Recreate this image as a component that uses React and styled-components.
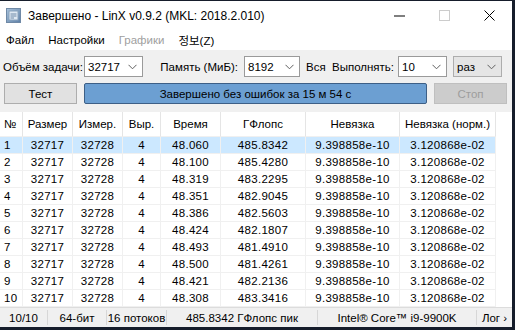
import React from 'react';
import styled, { createGlobalStyle } from 'styled-components';

const GlobalStyle = createGlobalStyle`
  html, body {
    margin: 0;
    padding: 0;
    background: #161d2b;
  }
  body {
    font-family: 'Liberation Sans', Arial, 'Noto Sans CJK KR', sans-serif;
    font-size: 11px;
    color: #000;
  }
`;

const Window = styled.div`
  width: 512px;
  height: 326px;
  margin-top: 1px;
  background: #f0f0f0;
  display: flex;
  flex-direction: column;
  overflow: hidden;
`;

const TitleBar = styled.div`
  height: 29px;
  background: #fff;
  display: flex;
  align-items: center;
  padding-left: 6px;
`;

const Title = styled.div`
  flex: 1;
  margin-left: 7px;
  font-size: 12px;
  color: #000;
`;

const WinButton = styled.div`
  width: 45px;
  height: 29px;
  display: flex;
  align-items: center;
  justify-content: center;
  margin-left: ${(p) => p.ml || 0}px;
`;

const MenuBar = styled.div`
  height: 20px;
  background: #fff;
  display: flex;
  align-items: center;
  padding-left: 6px;
  gap: 14px;
  font-size: 11.5px;
`;

const MenuItem = styled.span`
  color: ${(p) => (p.disabled ? '#a0a0a0' : '#000')};
  font-family: 'Liberation Sans', 'Noto Sans CJK KR', sans-serif;
`;

const Panel = styled.div`
  display: flex;
  flex-direction: column;
  gap: 6px;
  padding: 6px 0 8px 0;
`;

const Row = styled.div`
  display: flex;
  align-items: center;
  height: 21px;
  padding-left: ${(p) => p.pl || 0}px;
`;

const Label = styled.div`
  width: ${(p) => p.w}px;
  padding-left: ${(p) => p.pl || 0}px;
  padding-right: ${(p) => p.pr || 0}px;
  text-align: ${(p) => p.align || 'left'};
  box-sizing: border-box;
  white-space: nowrap;
  font-size: 11.5px;
`;

const Combo = styled.div`
  width: ${(p) => p.w}px;
  height: 21px;
  box-sizing: border-box;
  margin-left: ${(p) => p.ml || 0}px;
  border: 1px solid ${(p) => (p.button ? '#adadad' : '#9a9a9a')};
  background: ${(p) => (p.button ? '#e5e5e5' : '#fff')};
  display: flex;
  align-items: center;
  justify-content: space-between;
  padding: 0 5px 0 3px;
  font-size: 11.5px;
`;

const Button = styled.div`
  width: ${(p) => p.w}px;
  height: 21px;
  box-sizing: border-box;
  display: flex;
  align-items: center;
  justify-content: center;
  border: 1px solid ${(p) => (p.disabled ? '#bfbfbf' : '#adadad')};
  background: ${(p) => (p.disabled ? '#cccccc' : '#e1e1e1')};
  color: ${(p) => (p.disabled ? '#9d9d9d' : '#000')};
  font-size: 11.5px;
`;

const Progress = styled.div`
  width: 343px;
  height: 21px;
  margin: 0 7px;
  box-sizing: border-box;
  border: 1px solid #3d5f86;
  border-radius: 2px;
  background: #6c9fd2;
  display: flex;
  align-items: center;
  justify-content: center;
  font-size: 11.5px;
`;

const Table = styled.div`
  flex: 1;
  background: #fff;
  display: flex;
  flex-direction: column;
`;

const GridRow = styled.div`
  display: grid;
  grid-template-columns: 23px 50px 50px 38px 60px 85px 94px 96px;
  height: ${(p) => (p.header ? 25 : 17)}px;
`;

const Cell = styled.div`
  box-sizing: border-box;
  border-right: 1px solid ${(p) => (p.header ? '#e5e5e5' : '#f0f0f0')};
  border-bottom: 1px solid #f0f0f0;
  background: ${(p) => (p.selected ? '#cce8ff' : '#fff')};
  display: flex;
  align-items: center;
  justify-content: ${(p) => (p.left ? 'flex-start' : 'center')};
  padding-left: ${(p) => (p.left ? 4 : 0)}px;
  white-space: nowrap;
  font-size: 11.5px;
  letter-spacing: ${(p) => (p.header ? 0 : 0.3)}px;
`;

const StatusBar = styled.div`
  height: 19px;
  display: flex;
  align-items: center;
  background: #f0f0f0;
  border-top: 1px solid #dcdcdc;
`;

const StatusItem = styled.div`
  width: ${(p) => p.w}px;
  height: 15px;
  box-sizing: border-box;
  display: flex;
  align-items: center;
  justify-content: center;
  border-right: ${(p) => (p.last ? 'none' : '1px solid #d7d7d7')};
  white-space: nowrap;
  font-size: 11.5px;
`;

const Chevron = () => (
  <svg width="9" height="6" viewBox="0 0 9 6">
    <path d="M0.5 0.8 L4.5 4.8 L8.5 0.8" fill="none" stroke="#606060" strokeWidth="1" />
  </svg>
);

const AppIcon = () => (
  <svg width="15" height="15" viewBox="0 0 15 15">
    <defs>
      <linearGradient id="ig" x1="0" y1="0" x2="1" y2="1">
        <stop offset="0" stopColor="#a9c3dc" />
        <stop offset="1" stopColor="#5d7fa6" />
      </linearGradient>
    </defs>
    <rect x="0.5" y="0.5" width="14" height="14" fill="url(#ig)" stroke="#6f89a6" />
    <rect x="3" y="3" width="9" height="9" fill="#dfe9f3" stroke="#8aa3bd" />
    <path d="M4.5 6 H10.5 M4.5 8 H10.5 M4.5 10 H8" stroke="#6f8aa8" strokeWidth="1" />
  </svg>
);

const columns = ['№', 'Размер', 'Измер.', 'Выр.', 'Время', 'ГФлопс', 'Невязка', 'Невязка (норм.)'];

const results = [
  ['48.060', '485.8342'],
  ['48.100', '485.4280'],
  ['48.319', '483.2295'],
  ['48.351', '482.9045'],
  ['48.386', '482.5603'],
  ['48.424', '482.1807'],
  ['48.493', '481.4910'],
  ['48.500', '481.4261'],
  ['48.421', '482.2136'],
  ['48.308', '483.3416'],
];

export default function App() {
  return (
    <>
      <GlobalStyle />
      <Window>
        <TitleBar>
          <AppIcon />
          <Title>Завершено - LinX v0.9.2 (MKL: 2018.2.010)</Title>
          <WinButton>
            <svg width="11" height="2" viewBox="0 0 11 2">
              <rect x="0" y="0.5" width="11" height="1" fill="#000" />
            </svg>
          </WinButton>
          <WinButton>
            <svg width="11" height="11" viewBox="0 0 11 11">
              <rect x="0.5" y="0.5" width="10" height="10" fill="none" stroke="#cccccc" />
            </svg>
          </WinButton>
          <WinButton>
            <svg width="11" height="11" viewBox="0 0 11 11">
              <path d="M0.5 0.5 L10.5 10.5 M10.5 0.5 L0.5 10.5" stroke="#000" strokeWidth="1" />
            </svg>
          </WinButton>
        </TitleBar>
        <MenuBar>
          <MenuItem>Файл</MenuItem>
          <MenuItem>Настройки</MenuItem>
          <MenuItem disabled>Графики</MenuItem>
          <MenuItem>정보(Z)</MenuItem>
        </MenuBar>
        <Panel>
          <Row>
            <Label w={84} pl={3}>Объём задачи:</Label>
            <Combo w={59}>
              <span>32717</span>
              <Chevron />
            </Combo>
            <Label w={101} align="right" pr={6}>Память (МиБ):</Label>
            <Combo w={56}>
              <span>8192</span>
              <Chevron />
            </Combo>
            <Label w={32} pl={6}>Вся</Label>
            <Label w={66}>Выполнять:</Label>
            <Combo w={49}>
              <span>10</span>
              <Chevron />
            </Combo>
            <Combo w={49} ml={6} button>
              <span>раз</span>
              <Chevron />
            </Combo>
          </Row>
          <Row pl={4}>
            <Button w={73}>Тест</Button>
            <Progress>Завершено без ошибок за 15 м 54 с</Progress>
            <Button w={73} disabled>Стоп</Button>
          </Row>
        </Panel>
        <Table>
          <GridRow header>
            {columns.map((c, i) => (
              <Cell header key={c} left={i === 0}>
                {c}
              </Cell>
            ))}
          </GridRow>
          {results.map(([time, gflops], i) => (
            <GridRow key={i}>
              <Cell left selected={i === 0}>{i + 1}</Cell>
              <Cell selected={i === 0}>32717</Cell>
              <Cell selected={i === 0}>32728</Cell>
              <Cell selected={i === 0}>4</Cell>
              <Cell selected={i === 0}>{time}</Cell>
              <Cell selected={i === 0}>{gflops}</Cell>
              <Cell selected={i === 0}>9.398858e-10</Cell>
              <Cell selected={i === 0}>3.120868e-02</Cell>
            </GridRow>
          ))}
        </Table>
        <StatusBar>
          <StatusItem w={48}>10/10</StatusItem>
          <StatusItem w={59}>64-бит</StatusItem>
          <StatusItem w={60}>16 потоков</StatusItem>
          <StatusItem w={151}>485.8342 ГФлопс пик</StatusItem>
          <StatusItem w={159}>Intel® Core™ i9-9900K</StatusItem>
          <StatusItem w={35} last>Лог ›</StatusItem>
        </StatusBar>
      </Window>
    </>
  );
}
